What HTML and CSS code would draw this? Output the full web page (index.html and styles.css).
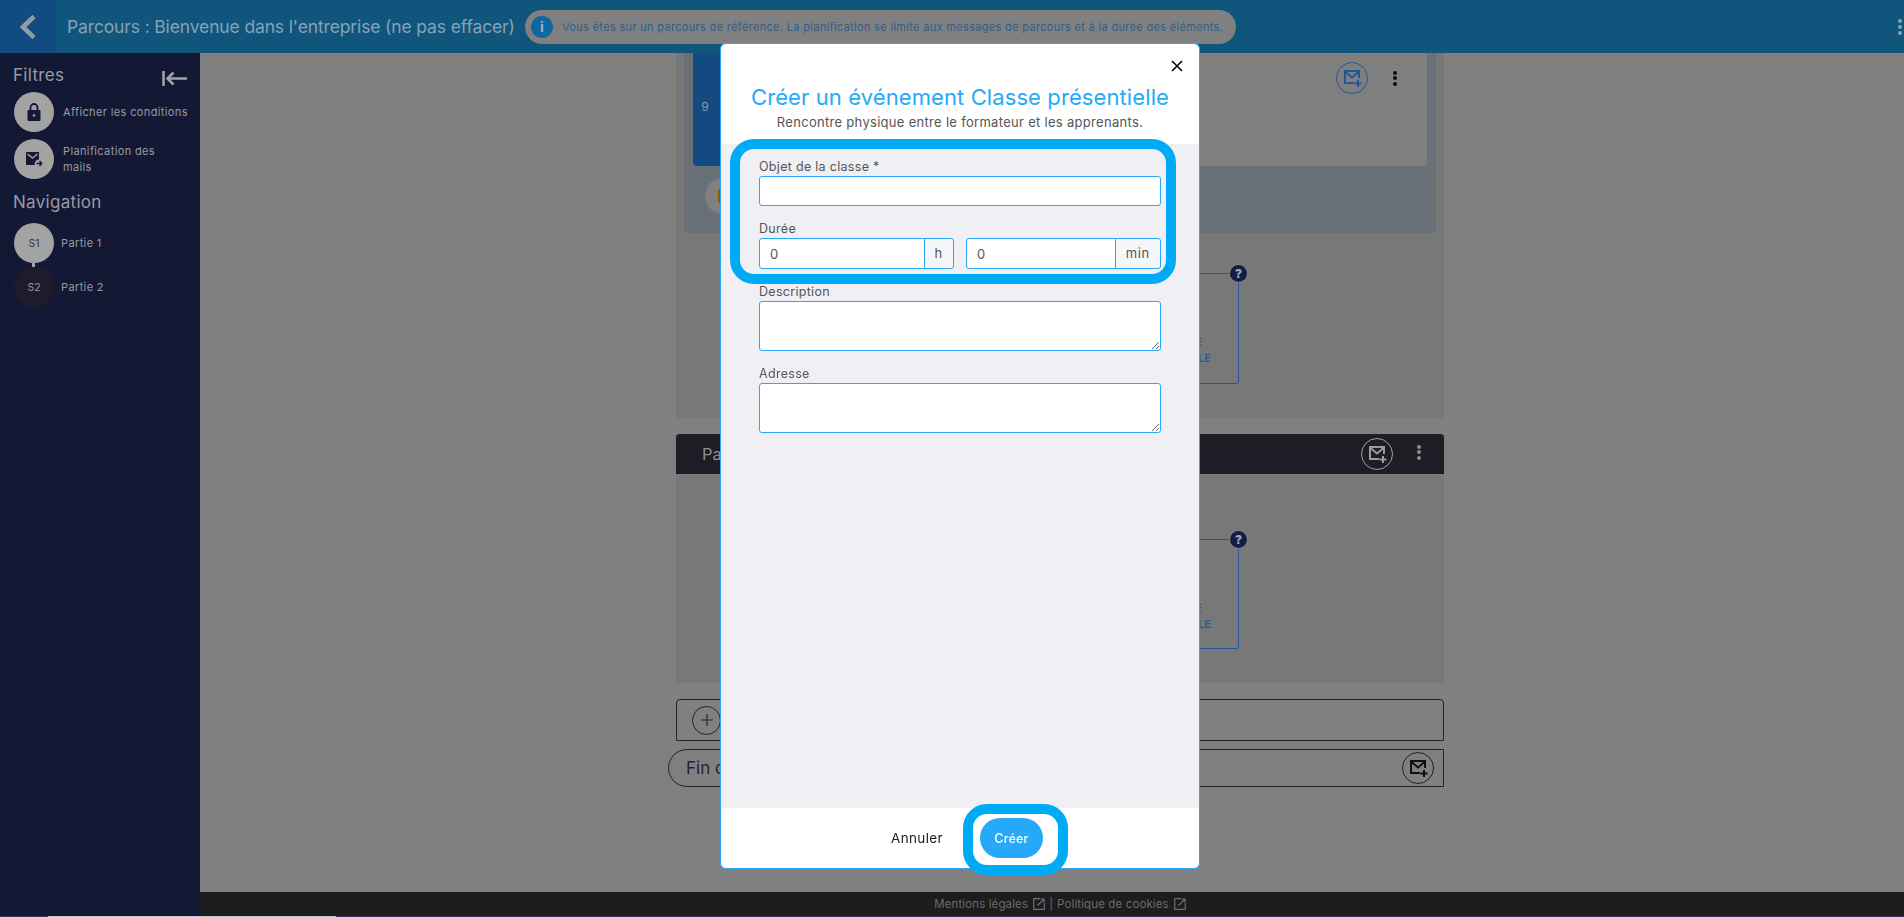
FILE: index.html
```html
<!DOCTYPE html>
<html lang="fr">
<head>
  <meta charset="UTF-8">
  <title>Parcours : Bienvenue dans l'entreprise</title>
  <link rel="stylesheet" href="styles.css">
</head>
<body>
  <header class="topbar">
    <a class="back">
      <svg width="18" height="26" viewBox="0 0 18 26"><path d="M15 2.5 4 13l11 10.5" fill="none" stroke="#8e9ca8" stroke-width="4.5"/></svg>
    </a>
    <div class="page-title">Parcours : Bienvenue dans l'entreprise (ne pas effacer)</div>
    <div class="notice">
      <span class="notice-icon">i</span>
      <span>Vous êtes sur un parcours de référence. La planification se limite aux messages de parcours et à la durée des éléments.</span>
    </div>
    <div class="top-dots"><i></i><i></i><i></i></div>
  </header>

  <div class="layout">
    <aside class="sidebar">
      <div class="side-head">
        <h2>Filtres</h2>
        <svg width="25" height="15" viewBox="0 0 25 15"><path d="M1.500 0v15M25 7.500H5M11.500 1.500l-6 6 6 6" fill="none" stroke="#a3a3a8" stroke-width="2.500"/></svg>
      </div>
      <div class="side-item">
        <span class="round">
          <svg width="14" height="18" viewBox="0 0 14 18"><path d="M3.5 7V4.5a3.5 3.5 0 0 1 7 0V7" fill="none" stroke="#141a36" stroke-width="1.8"/><rect x="0.5" y="7" width="13" height="11" rx="1" fill="#141a36"/><circle cx="7" cy="12.5" r="1.3" fill="#a3a3a3"/></svg>
        </span>
        <span class="side-line">Afficher les conditions</span>
      </div>
      <div class="side-item">
        <span class="round">
          <svg width="17" height="16" viewBox="0 0 17 16"><path d="M0 1h13v7.5a4 4 0 0 0-4 5.5H0z" fill="#141a36"/><path d="m1.500 3 5 4 5-4" fill="none" stroke="#a3a3a3" stroke-width="1.400"/><path d="M10.500 12.500h5M13.500 10l2.300 2.500-2.300 2.500" fill="none" stroke="#141a36" stroke-width="1.400"/></svg>
        </span>
        <span class="side-wrap">Planification des mails</span>
      </div>
      <h2 class="nav-title">Navigation</h2>
      <div class="nav-list">
        <div class="nav-item"><span class="round">S1</span><span>Partie 1</span></div>
        <div class="nav-item"><span class="round current">S2</span><span>Partie 2</span></div>
      </div>
    </aside>

    <div class="main">
      <div class="content">
        <section class="section first">
          <div class="tinted">
            <div class="card">
              <div class="card-num">9</div>
              <div class="card-actions">
                <span class="mail-btn blue">
                  <svg width="19" height="18" viewBox="0 0 19 18"><path d="M10 13H1V1h14v7M1 1.500l7 6 7-6M14 10v7M10.500 13.500h7" fill="none" stroke="#23579b" stroke-width="2"/></svg>
                </span>
                <span class="dots"><i></i><i></i><i></i></span>
              </div>
            </div>
            <div class="warn"><i></i></div>
          </div>
          <div class="add-box">
            <span class="help">?</span>
            <div>CRÉER UNE</div>
            <div>CLASSE PRÉSENTIELLE</div>
          </div>
        </section>

        <section class="section second">
          <div class="section-head">
            <span class="section-name">Partie 2</span>
            <span class="mail-btn light">
              <svg width="19" height="18" viewBox="0 0 19 18"><path d="M10 13H1V1h14v7M1 1.500l7 6 7-6M14 10v7M10.500 13.500h7" fill="none" stroke="#9a9a9a" stroke-width="2"/></svg>
            </span>
            <span class="dots pale"><i></i><i></i><i></i></span>
          </div>
          <div class="add-box low">
            <span class="help">?</span>
            <div>CRÉER UNE</div>
            <div>CLASSE PRÉSENTIELLE</div>
          </div>
        </section>

        <div class="add-row">
          <span class="plus">
            <svg width="12" height="12" viewBox="0 0 12 12"><path d="M6 0v12M0 6h12" stroke="#25232e" stroke-width="1.200"/></svg>
          </span>
        </div>
        <div class="end-row">
          <span class="end-name">Fin du parcours</span>
          <span class="mail-btn dark">
            <svg width="19" height="18" viewBox="0 0 19 18"><path d="M10 13H1V1h14v7M1 1.500l7 6 7-6M14 10v7M10.500 13.500h7" fill="none" stroke="#0e0e12" stroke-width="2"/></svg>
          </span>
        </div>
      </div>
      <footer class="legal">
        <span>Mentions légales</span>
        <svg class="ext" width="12" height="12" viewBox="0 0 12 12"><path d="M7 .7H.7v10.600h10.600V5M4.500 7.500 11 1M7.500 1H11v3.500" fill="none" stroke="#6f6f6f" stroke-width="1.200"/></svg>
        <span>|</span>
        <span>Politique de cookies</span>
        <svg class="ext" width="12" height="12" viewBox="0 0 12 12"><path d="M7 .7H.7v10.600h10.600V5M4.500 7.500 11 1M7.500 1H11v3.500" fill="none" stroke="#6f6f6f" stroke-width="1.200"/></svg>
      </footer>
    </div>
  </div>

  <div class="strip"><i class="s1"></i><i class="s2"></i><i class="s3"></i></div>

  <div class="modal">
    <button class="close">
      <svg width="12" height="12" viewBox="0 0 12 12"><path d="m1 1 10 10M11 1 1 11" stroke="#000" stroke-width="1.600"/></svg>
    </button>
    <div class="modal-head">
      <h1>Créer un événement Classe présentielle</h1>
      <p>Rencontre physique entre le formateur et les apprenants.</p>
    </div>
    <div class="modal-body">
      <div class="field">
        <label>Objet de la classe *</label>
        <input class="input" type="text">
      </div>
      <div class="field">
        <label>Durée</label>
        <div class="duration">
          <div class="group">
            <input class="input" type="text" value="0">
            <span class="addon">h</span>
          </div>
          <div class="group">
            <input class="input" type="text" value="0">
            <span class="addon">min</span>
          </div>
        </div>
      </div>
      <div class="field">
        <label>Description</label>
        <textarea class="input area"></textarea>
      </div>
      <div class="field">
        <label>Adresse</label>
        <textarea class="input area"></textarea>
      </div>
    </div>
    <div class="modal-foot">
      <a class="cancel">Annuler</a>
      <button class="create">Créer</button>
    </div>
    <div class="ring ring-form"></div>
    <div class="ring ring-btn"></div>
  </div>
</body>
</html>
```

FILE: styles.css
```css
* {
  box-sizing: border-box;
}
body {
  margin: 0;
  height: 917px;
  overflow: hidden;
  background: #808080;
  font-family: "Inter", "Noto Sans", sans-serif;
  display: flex;
  flex-direction: column;
}

/* top bar */
.topbar {
  height: 53px;
  flex: none;
  background: #10567c;
  display: flex;
  align-items: center;
}
.back {
  width: 56px;
  height: 53px;
  background: #124a82;
  display: flex;
  align-items: center;
  justify-content: center;
}
.page-title {
  margin-left: 11px;
  font-size: 17.5px;
  letter-spacing: -0.14px;
  color: #86a2b5;
  white-space: nowrap;
  width: 458px;
}
.notice {
  width: 711px;
  height: 34px;
  border-radius: 17px;
  background: #808080;
  display: flex;
  align-items: center;
  gap: 9px;
  padding-left: 6px;
  font-size: 11px;
  letter-spacing: 0.32px;
  color: #2c5f8c;
  white-space: nowrap;
}
.notice-icon {
  width: 22px;
  height: 22px;
  border-radius: 50%;
  background: #10679f;
  color: #9fb4c4;
  font-weight: 700;
  font-size: 14px;
  text-align: center;
  line-height: 22px;
}
.top-dots {
  margin-left: auto;
  margin-right: 2px;
  display: flex;
  flex-direction: column;
  gap: 2px;
}
.top-dots i, .dots i {
  display: block;
  width: 4px;
  height: 4px;
  border-radius: 50%;
  background: #8aa2b4;
}

.layout {
  flex: 1;
  min-height: 0;
  display: flex;
}

/* sidebar */
.sidebar {
  width: 200px;
  flex: none;
  background: #131835;
  color: #9a9aa2;
  padding: 12px 13px 0 14px;
  font-size: 11px;
  letter-spacing: 0.37px;
}
.sidebar h2 {
  margin: 0;
  font-size: 17px;
  font-weight: 400;
  line-height: 20px;
  letter-spacing: 0.3px;
}
.side-head {
  display: flex;
  justify-content: space-between;
  align-items: flex-start;
  margin-left: -1px;
  height: 27px;
}
.side-head svg {
  margin-top: 6px;
}
.side-item {
  display: flex;
  align-items: center;
  gap: 9px;
  height: 40px;
  margin-bottom: 7px;
  line-height: 16px;
}
.side-line {
  white-space: nowrap;
}
.side-wrap {
  width: 100px;
}
.round {
  width: 40px;
  height: 40px;
  flex: none;
  border-radius: 50%;
  background: #a3a3a3;
  color: #3a3a40;
  display: flex;
  align-items: center;
  justify-content: center;
  font-size: 10.500px;
  letter-spacing: 0;
}
.sidebar .nav-title {
  margin: 13px 0 0 -1px;
}
.nav-list {
  margin-top: 11px;
}
.nav-item {
  display: flex;
  align-items: center;
  gap: 7px;
  height: 40px;
  margin-bottom: 4px;
  position: relative;
}
.nav-item:first-child::after {
  content: "";
  position: absolute;
  left: 18px;
  top: 40px;
  width: 3px;
  height: 4px;
  background: #a3a3a3;
}
.round.current {
  background: #1f1b2b;
  color: #9a9aa2;
}

/* main column */
.main {
  flex: 1;
  min-width: 0;
  display: flex;
  flex-direction: column;
}
.content {
  flex: 1;
  min-height: 0;
  padding-left: 476px;
  width: 1244px;
}
.section {
  background: #787878;
}
.section.first {
  height: 365px;
}
.tinted {
  margin: 0 8px;
  height: 180px;
  background: #6a7078;
  padding: 0 9px;
  position: relative;
}
.card {
  height: 113px;
  background: #7f7f7f;
  border-radius: 0 0 4px 4px;
  display: flex;
  justify-content: space-between;
}
.card-num {
  width: 32px;
  background: #134a80;
  border-radius: 0 0 0 4px;
  color: #8e9aa8;
  font-size: 12px;
  display: flex;
  align-items: center;
  justify-content: center;
  padding: 0 8px 6px 0;
}
.card-actions {
  display: flex;
  align-items: center;
  gap: 25px;
  height: 50px;
  padding-right: 30px;
}
.mail-btn {
  width: 32px;
  height: 32px;
  border-radius: 50%;
  border: 1px solid;
  display: flex;
  align-items: center;
  justify-content: center;
  padding: 2px 0 0 2px;
}
.mail-btn.blue {
  border-color: #23579b;
}
.mail-btn.light {
  border-color: #a0a0a0;
}
.mail-btn.dark {
  border-color: #25232e;
}
.dots {
  display: flex;
  flex-direction: column;
  gap: 1.500px;
}
.dots i {
  background: #0b0b0f;
}
.dots.pale i {
  background: #8f8f8f;
}
.warn {
  position: absolute;
  left: 21px;
  top: 125px;
  width: 36px;
  height: 36px;
  border-radius: 50%;
  background: #808080;
}
.warn i {
  position: absolute;
  left: 13px;
  top: 11px;
  width: 5px;
  height: 14px;
  background: #8c5c00;
}

/* add box, mostly behind the dialog */
.add-box {
  position: relative;
  margin: 40px 0 0 54px;
  width: 509px;
  height: 111px;
  border-top: 1px solid #23579b;
  border-right: 1px solid #23579b;
  border-bottom: 1px solid #23579b;
  border-radius: 0 0 3px 0;
  padding: 60px 27px 0 0;
  color: #2a5a90;
  font-size: 11px;
  font-weight: 600;
  line-height: 16px;
  text-align: right;
}
.add-box div:first-of-type {
  margin-right: 9px;
}
.add-box.low {
  margin-top: 65px;
  height: 110px;
}
.help {
  position: absolute;
  right: -9px;
  top: -9px;
  width: 17px;
  height: 17px;
  border-radius: 50%;
  background: #161d45;
  box-shadow: 0 0 0 1px #808080;
  color: #a8a8b0;
  font-size: 12px;
  font-weight: 800;
  line-height: 17px;
  text-align: center;
}
.section.second {
  margin-top: 16px;
  height: 249px;
}
.section-head {
  height: 40px;
  background: #1f1c25;
  border-radius: 4px 4px 0 0;
  display: flex;
  align-items: center;
  padding: 0 23px 0 26px;
  color: #8f8f96;
  font-size: 16.500px;
}
.section-name {
  margin-right: auto;
}
.section-head .dots {
  margin: -4px 0 0 24px;
}
.add-row {
  margin-top: 16px;
  height: 42px;
  border: 1px solid #25232e;
  border-radius: 4px 4px 0 0;
  padding-left: 15px;
  display: flex;
  align-items: center;
}
.plus {
  width: 29px;
  height: 29px;
  border-radius: 50%;
  border: 1px solid #25232e;
  display: flex;
  align-items: center;
  justify-content: center;
}
.end-row {
  margin: 8px 0 0 -8px;
  height: 38px;
  border: 1px solid #25232e;
  border-radius: 19px 0 0 19px;
  display: flex;
  align-items: center;
  justify-content: space-between;
  padding: 0 9px 0 17px;
  color: #25232e;
  font-size: 17px;
}
.legal {
  height: 24px;
  flex: none;
  background: #1d1d1d;
  color: #6b6b6b;
  font-size: 11.500px;
  letter-spacing: 0.12px;
  display: flex;
  align-items: center;
  justify-content: center;
  gap: 4px;
  padding-left: 16px;
}
.ext {
  margin-left: 1px;
}
.strip {
  height: 1px;
  flex: none;
  display: flex;
}
.strip i {
  display: block;
  height: 1px;
}
.s1 {
  width: 48px;
  background: #3a3a48;
}
.s2 {
  width: 288px;
  background: #c8c8c8;
}
.s3 {
  flex: 1;
  background: #38305a;
}

/* dialog */
.modal {
  position: fixed;
  left: 720px;
  top: 43px;
  width: 480px;
  height: 826px;
  background: #fff;
  border: 1px solid #25a9f8;
  border-radius: 6px;
  display: flex;
  flex-direction: column;
}
.close {
  position: absolute;
  right: 16px;
  top: 16px;
  padding: 0;
  border: 0;
  background: none;
  line-height: 0;
}
.modal-head {
  height: 100px;
  flex: none;
  text-align: center;
  padding-top: 40px;
}
.modal-head h1 {
  margin: 0;
  font-size: 22px;
  font-weight: 400;
  line-height: 26px;
  letter-spacing: 0.1px;
  color: #25a9f8;
  white-space: nowrap;
}
.modal-head p {
  margin: 4px 0 0;
  font-size: 13px;
  line-height: 16px;
  letter-spacing: 0.3px;
  color: #555;
}
.modal-body {
  flex: 1;
  background: #efeff4;
  padding: 14px 38px 0 38px;
  display: flex;
  flex-direction: column;
  gap: 14px;
}
.field label {
  display: block;
  height: 18px;
  font-size: 12.500px;
  line-height: 18px;
  letter-spacing: 0.3px;
  color: #555;
}
.input {
  display: block;
  width: 100%;
  height: 30px;
  margin: 0;
  padding: 0 10px;
  border: 1px solid #25a9f8;
  border-radius: 3px;
  background: #fff;
  font-family: inherit;
  font-size: 13px;
  color: #555;
  outline: none;
}
.area {
  height: 50px;
  padding-top: 6px;
}
.duration {
  display: flex;
  gap: 12px;
}
.group {
  flex: 1;
  height: 31px;
  display: flex;
}
.group .input {
  flex: 1;
  min-width: 0;
  height: 31px;
  border-radius: 3px 0 0 3px;
}
.addon {
  flex: none;
  height: 31px;
  padding: 0 10px;
  border: 1px solid #25a9f8;
  margin-left: -1px;
  border-radius: 0 3px 3px 0;
  background: #f5f6fa;
  font-size: 13px;
  letter-spacing: 0.7px;
  line-height: 29px;
  color: #555;
}
.modal-foot {
  height: 60px;
  flex: none;
  display: flex;
  align-items: center;
  justify-content: center;
  gap: 37px;
  padding-left: 14px;
}
.cancel {
  font-size: 13.500px;
  letter-spacing: 0.35px;
  color: #222;
}
.create {
  width: 63px;
  height: 40px;
  border: 0;
  border-radius: 20px;
  background: #25a9f8;
  color: #fff;
  font-family: inherit;
  font-size: 12.500px;
  font-weight: 500;
  letter-spacing: 0.2px;
}

/* highlight rings drawn over the screenshot */
.ring {
  position: absolute;
  border: 10px solid #00aaf5;
  border-radius: 24px;
}
.ring-form {
  left: 9px;
  top: 95px;
  width: 446px;
  height: 145px;
}
.ring-btn {
  left: 242px;
  top: 760px;
  width: 105px;
  height: 71px;
}
```
